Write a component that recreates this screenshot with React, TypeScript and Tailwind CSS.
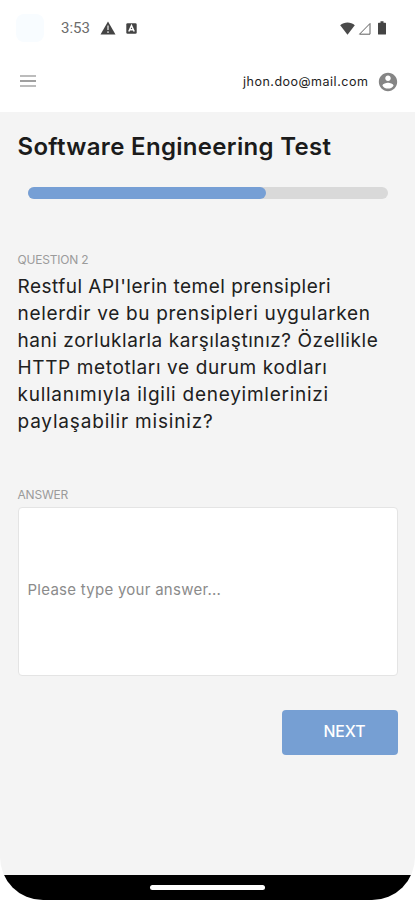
const questionLines = [
  { text: "Restful API'lerin temel prensipleri", className: "tracking-[0.48px]" },
  { text: "nelerdir ve bu prensipleri uygularken", className: "tracking-[0.68px]" },
  { text: "hani zorluklarla karşılaştınız? Özellikle", className: "tracking-[0.56px]" },
  { text: "HTTP metotları ve durum kodları", className: "tracking-[0.63px]" },
  { text: "kullanımıyla ilgili deneyimlerinizi", className: "tracking-[0.75px]" },
  { text: "paylaşabilir misiniz?", className: "tracking-[0.82px]" },
];

function StatusBar() {
  return (
    <div className="flex h-14 items-center pl-4 pr-[29px]">
      <span className="size-7 rounded-lg bg-[#f8fcff]" />
      <span className="ml-[17px] w-[30px] whitespace-nowrap font-['Roboto',sans-serif] text-[15px] text-[#6c6c6c]">3:53</span>
      <svg className="ml-[9px] h-[14px] w-4" viewBox="0 0 16 14">
        <path d="M8 0.5 15.5 13.5H0.5Z" fill="#444" />
        <path d="M8 4.5v4.5M8 10.3v1.7" stroke="#c8c8c8" strokeWidth="1.6" />
      </svg>
      <svg className="ml-[10px] h-[11px] w-[11px]" viewBox="0 0 11 11">
        <rect x="0.3" y="0.3" width="10.4" height="10.4" rx="1.3" fill="#444" />
        <path d="M2.8 8.5 5.5 2.5 8.2 8.5M4 6.7h3" stroke="#fff" strokeWidth="1.5" fill="none" />
      </svg>
      <svg className="ml-auto h-[13px] w-[15px]" viewBox="0 0 15 13">
        <path d="M0.2 3.2C4.3 -0.3 10.7 -0.3 14.8 3.2L7.5 12.8Z" fill="#4a4a4a" />
      </svg>
      <svg className="ml-[3px] h-[13px] w-[13px]" viewBox="0 0 13 13">
        <path d="M1.5 12.2 12 1.5V12.2Z" fill="none" stroke="#606060" strokeWidth="1" />
      </svg>
      <svg className="ml-[7px] h-[14px] w-[8px]" viewBox="0 0 8 14">
        <path d="M2.5 0.3h3v1.4H7.3a.7.7 0 0 1 .7.7v10.5a.7.7 0 0 1-.7.7H.7a.7.7 0 0 1-.7-.7V2.4a.7.7 0 0 1 .7-.7h1.8Z" fill="#444" />
      </svg>
    </div>
  );
}

function Header() {
  return (
    <header className="flex h-14 items-center pb-1.5 pl-5 pr-4">
      <button className="flex h-3 w-4 flex-col justify-between" aria-label="Menu">
        <span className="h-[2px] bg-[#bcbcbc]" />
        <span className="h-[2px] bg-[#a0a0a0]" />
        <span className="h-[2px] bg-[#bcbcbc]" />
      </button>
      <span className="ml-auto w-[126px] whitespace-nowrap pt-0.5 text-[12.5px] tracking-[0.5px] text-[#222]">jhon.doo@mail.com</span>
      <svg className="ml-[8px] mt-px size-[22px]" viewBox="0 0 24 24" fill="#858585">
        <path d="M12 2C6.48 2 2 6.48 2 12s4.48 10 10 10 10-4.48 10-10S17.52 2 12 2zm0 3c1.66 0 3 1.34 3 3s-1.34 3-3 3-3-1.34-3-3 1.34-3 3-3zm0 14.2c-2.5 0-4.71-1.28-6-3.22.03-1.99 4-3.08 6-3.08 1.99 0 5.97 1.09 6 3.08-1.29 1.94-3.5 3.22-6 3.22z" />
      </svg>
    </header>
  );
}

export default function App() {
  return (
    <div className="h-[900px] w-[415px] bg-white font-['Inter','Noto_Sans',sans-serif]">
      <div className="flex h-full flex-col overflow-hidden rounded-b-[43px] bg-[#f4f4f4]">
        <div className="h-28 bg-white">
          <StatusBar />
          <Header />
        </div>
        <main className="flex flex-1 flex-col pl-[17.5px] pr-[17px]">
          <h1 className="mt-[19px] h-8 whitespace-nowrap text-[24px] font-semibold leading-8 tracking-[0.32px] text-[#1b1b1b]">Software Engineering Test</h1>
          <div className="ml-[10.5px] mr-[10px] mt-[24px] h-3 rounded-full bg-[#d9d9d9]">
            <div className="h-full w-[238px] rounded-full bg-[#769fd5]" />
          </div>
          <p className="mt-[52px] h-[22px] text-[12px] leading-[18px] tracking-[-0.2px] text-[#9b9b9b]">QUESTION 2</p>
          <div className="whitespace-nowrap text-[19px] leading-[27px] text-[#202020]">
            {questionLines.map((line) => (
              <div key={line.text} className={line.className}>{line.text}</div>
            ))}
          </div>
          <p className="mt-[51px] h-[21px] text-[12px] leading-[18px] tracking-[-0.2px] text-[#9b9b9b]">ANSWER</p>
          <div className="flex h-[169px] items-center rounded-[4px] border border-[#e4e4e4] bg-white pb-0.5 pl-[9px] text-[15px] tracking-[0.27px] text-[#8b8b8b]">
            <span className="whitespace-nowrap">Please type your answer...</span>
          </div>
          <button className="mt-[34px] h-[45px] w-[116px] self-end rounded-[4px] bg-[#769fd3] pb-0.5 pl-[9px] text-[15.8px] font-medium text-white">NEXT</button>
        </main>
        <footer className="flex h-[25px] justify-center bg-black pt-[10px]">
          <span className="h-[5px] w-[115px] rounded-full bg-white" />
        </footer>
      </div>
    </div>
  );
}
